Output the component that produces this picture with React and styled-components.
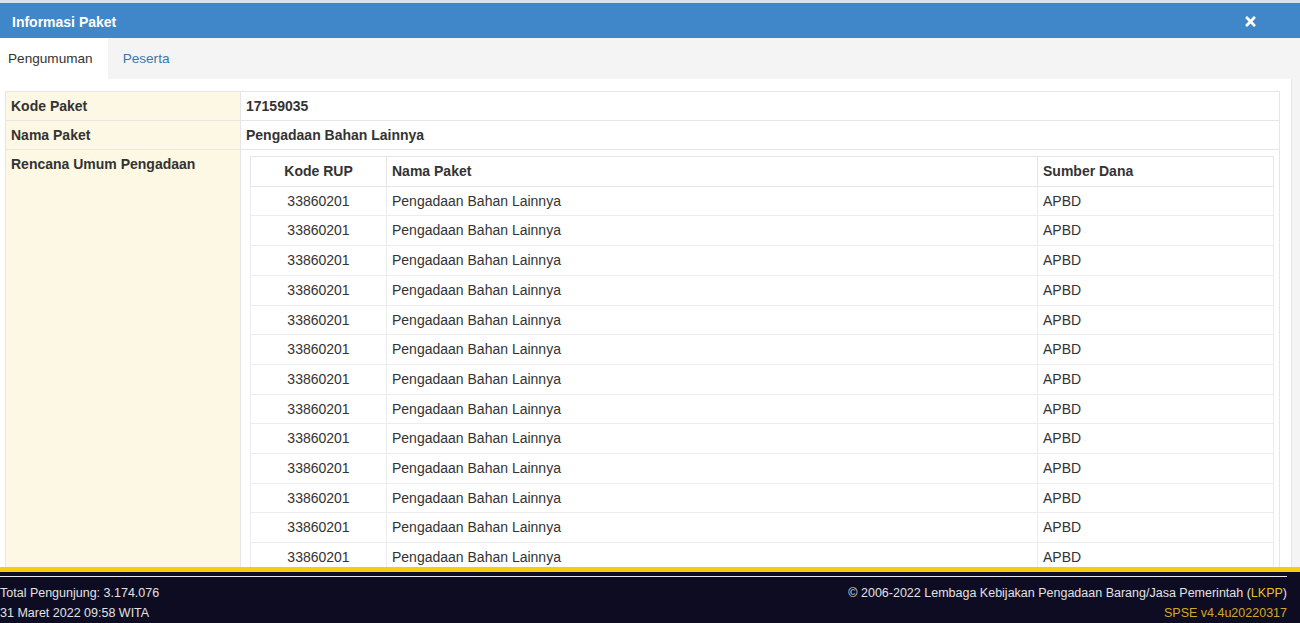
import styled, { createGlobalStyle } from "styled-components";
import { FaTimes } from "react-icons/fa";

const GlobalStyle = createGlobalStyle`
  html, body {
    margin: 0;
    padding: 0;
    background: #fff;
  }
  * {
    box-sizing: border-box;
  }
`;

const rows = Array.from({ length: 13 }, () => ({
  kode: "33860201",
  nama: "Pengadaan Bahan Lainnya",
  sumber: "APBD",
}));

function App() {
  return (
    <Page>
      <GlobalStyle />
      <ModalHeader>
        <Title>Informasi Paket</Title>
        <CloseButton>
          <FaTimes size={15} />
        </CloseButton>
      </ModalHeader>
      <TabBar>
        <Tab $active>Pengumuman</Tab>
        <Tab>Peserta</Tab>
      </TabBar>
      <Body>
        <Panel>
          <InfoTable>
            <tbody>
              <tr>
                <Label>Kode Paket</Label>
                <Value>17159035</Value>
              </tr>
              <tr>
                <Label>Nama Paket</Label>
                <Value>Pengadaan Bahan Lainnya</Value>
              </tr>
              <tr>
                <Label>Rencana Umum Pengadaan</Label>
                <Value $plain>
                  <RupTable>
                    <thead>
                      <tr>
                        <Th $center $w={136}>Kode RUP</Th>
                        <Th>Nama Paket</Th>
                        <Th $w={236}>Sumber Dana</Th>
                      </tr>
                    </thead>
                    <tbody>
                      {rows.map((r, i) => (
                        <tr key={i}>
                          <Td $center>{r.kode}</Td>
                          <Td>{r.nama}</Td>
                          <Td>{r.sumber}</Td>
                        </tr>
                      ))}
                    </tbody>
                  </RupTable>
                </Value>
              </tr>
            </tbody>
          </InfoTable>
        </Panel>
        <Gutter />
      </Body>
      <Footer>
        <FooterInner>
          <FooterCol>
            <p>Total Pengunjung: 3.174.076</p>
            <p>31 Maret 2022 09:58 WITA</p>
          </FooterCol>
          <FooterCol $right>
            <p>
              © 2006-2022 Lembaga Kebijakan Pengadaan Barang/Jasa Pemerintah (
              <Gold>LKPP</Gold>)
            </p>
            <p>
              <Version>SPSE v4.4u20220317</Version>
            </p>
          </FooterCol>
        </FooterInner>
      </Footer>
    </Page>
  );
}

const Page = styled.div`
  height: 100vh;
  display: flex;
  flex-direction: column;
  overflow: hidden;
  font-family: "Liberation Sans", Arial, sans-serif;
  font-size: 14px;
  color: #333;
`;

const ModalHeader = styled.header`
  flex: 0 0 38px;
  display: flex;
  align-items: center;
  justify-content: space-between;
  padding: 2px 42px 0 12px;
  background: #3f87c9;
  border-top: 3px solid #d6e2ee;
`;

const Title = styled.h1`
  margin: 0;
  font-size: 14px;
  font-weight: 700;
  color: #fff;
`;

const CloseButton = styled.span`
  display: flex;
  color: #fff;
`;

const TabBar = styled.nav`
  flex: 0 0 41px;
  display: flex;
  background: #f4f4f4;
`;

const Tab = styled.a`
  display: flex;
  align-items: center;
  padding: ${(p) => (p.$active ? "0 15px 0 8px" : "0 15px")};
  background: ${(p) => (p.$active ? "#fff" : "transparent")};
  color: ${(p) => (p.$active ? "#333" : "#337ab7")};
  font-size: 13.6px;
  cursor: pointer;
`;

const Body = styled.main`
  flex: 1;
  min-height: 0;
  display: flex;
  background: #f4f4f4;
  overflow: hidden;
`;

const Panel = styled.section`
  flex: 1;
  background: #fff;
  padding: 12px 11px 0 5px;
  border-right: 1px solid #e6e6e6;
  overflow: hidden;
`;

const Gutter = styled.div`
  flex: 0 0 8px;
`;

const InfoTable = styled.table`
  width: 100%;
  border-collapse: collapse;
  border: 1px solid #e3e3e3;
`;

const Label = styled.th`
  width: 235px;
  padding: 5px;
  background: #fcf8e3;
  border: 1px solid #e6e6e6;
  font-weight: 700;
  text-align: left;
  vertical-align: top;
  line-height: 18px;
`;

const Value = styled.td`
  padding: ${(p) => (p.$plain ? "6px 5px 5px 9px" : "5px")};
  border: 1px solid #e6e6e6;
  font-weight: ${(p) => (p.$plain ? 400 : 700)};
  line-height: 18px;
  vertical-align: top;
`;

const RupTable = styled.table`
  width: 100%;
  border-collapse: collapse;
  border: 1px solid #e6e6e6;
`;

const Th = styled.th`
  width: ${(p) => (p.$w ? `${p.$w}px` : "auto")};
  padding: 5px;
  border: 1px solid #e6e6e6;
  font-weight: 700;
  text-align: ${(p) => (p.$center ? "center" : "left")};
  line-height: 18.7px;
`;

const Td = styled.td`
  padding: 5px;
  border: 1px solid #ececec;
  font-weight: 400;
  text-align: ${(p) => (p.$center ? "center" : "left")};
  line-height: 18.7px;
`;

const Footer = styled.footer`
  flex: 0 0 55px;
  background: #0e0c22;
  border-top: 5px solid #f6cb10;
  padding: 4px 13px 0 0;
  color: #e2e2e2;
  font-size: 12.5px;
`;

const FooterInner = styled.div`
  display: flex;
  justify-content: space-between;
  border-top: 1px solid #e8e8e8;
  padding-top: 6px;
`;

const FooterCol = styled.div`
  text-align: ${(p) => (p.$right ? "right" : "left")};

  p {
    margin: 0;
    line-height: 20px;
  }
`;

const Gold = styled.span`
  color: #e6c21c;
`;

const Version = styled.span`
  color: #d2a72a;
`;

export default App;
